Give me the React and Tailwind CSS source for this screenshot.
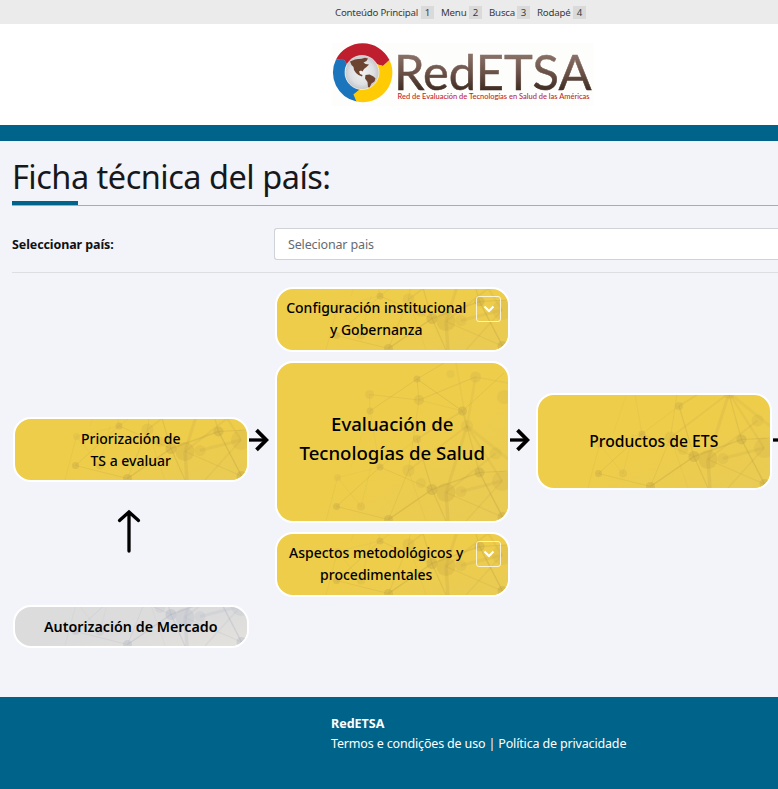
import React from 'react'

const NODES = [
  [141, 16, 3.5, 0.3], [93.5, 31.5, 4.5, 0.16], [94, 48, 3.5, 0.26], [143, 37, 5, 0.22],
  [186.5, 48, 4.5, 0.32], [199.5, 14, 5.5, 0.16], [174.5, 11, 4, 0.12], [228, 34, 7, 0.14],
  [141, 76, 4, 0.26], [104, 104, 3.5, 0.3], [132.5, 107.5, 6, 0.16], [61.5, 114.5, 3.5, 0.14],
  [60.5, 143.5, 3.5, 0.3], [85, 143.5, 4, 0.18], [112.5, 156.5, 4.5, 0.32], [156, 126.5, 5.5, 0.32],
  [170, 129.5, 9.5, 0.22], [185, 128.5, 5.5, 0.16], [203.5, 109.5, 5, 0.34], [219.5, 90.5, 6, 0.14],
  [191, 63, 6, 0.14], [226, 118, 10, 0.16], [226.5, 154, 5, 0.32], [145, 120, 5, 0.14],
]

const LINES = [
  [141, 16, 186.5, 48, 1, 0.28], [141, 16, 94, 48, 1, 0.22], [141, 16, 143, 37, 1, 0.2],
  [93.5, 31.5, 143, 37, 1, 0.2], [93.5, 31.5, 94, 48, 1, 0.14], [141, 16, 168, 0, 1, 0.2],
  [143, 37, 199.5, 14, 1.2, 0.2], [143, 37, 186.5, 48, 1, 0.14], [199.5, 14, 232, 20, 1.5, 0.12],
  [186.5, 48, 228, 10, 1, 0.2], [186.5, 48, 203.5, 109.5, 1.2, 0.24], [186.5, 48, 141, 76, 1.5, 0.18],
  [141, 76, 156, 126.5, 1.2, 0.26], [94, 48, 104, 104, 0.8, 0.14], [104, 104, 141, 76, 0.8, 0.16],
  [61.5, 114.5, 104, 104, 0.8, 0.12], [61.5, 114.5, 50, 158, 0.8, 0.14], [60.5, 143.5, 104, 104, 1, 0.2],
  [60.5, 143.5, 112.5, 156.5, 1, 0.2], [85, 143.5, 61.5, 114.5, 0.8, 0.12], [85, 143.5, 95, 104, 0.8, 0.12],
  [104, 104, 156, 126.5, 1, 0.2], [112.5, 156.5, 156, 126.5, 1.4, 0.32], [112.5, 156.5, 132.5, 107.5, 1, 0.18],
  [132.5, 107.5, 143, 37, 1, 0.16], [132.5, 107.5, 191, 63, 1.6, 0.16], [156, 126.5, 203.5, 109.5, 1.4, 0.28],
  [170, 129.5, 191, 63, 3, 0.17], [170, 129.5, 172, 158, 3.5, 0.2], [191, 63, 232, 96, 3, 0.12],
  [191, 63, 199.5, 14, 2.5, 0.12], [191, 63, 180, 0, 1.5, 0.1], [203.5, 109.5, 232, 108, 1.2, 0.28],
  [203.5, 109.5, 226.5, 154, 1.4, 0.32], [185, 128.5, 226, 118, 3, 0.16], [226.5, 154, 170, 129.5, 1.2, 0.18],
  [156, 126.5, 170, 158, 1.2, 0.28], [226, 118, 191, 63, 2.2, 0.15], [219.5, 90.5, 170, 129.5, 2, 0.16],
  [226, 118, 190, 158, 1.4, 0.16], [94, 48, 75, 104, 0.8, 0.08], [132.5, 107.5, 150, 158, 0.8, 0.12],
]

function Network({ color }) {
  return (
    <svg className="absolute right-0 bottom-0" width="232" height="158" viewBox="0 0 232 158" fill={color} stroke={color} aria-hidden="true">
      {LINES.map(([x1, y1, x2, y2, w, o], i) => (
        <line key={i} x1={x1} y1={y1} x2={x2} y2={y2} strokeWidth={w} strokeOpacity={o} />
      ))}
      {NODES.map(([x, y, r, o], i) => (
        <circle key={i} cx={x} cy={y} r={r} fillOpacity={o} stroke="none" />
      ))}
    </svg>
  )
}

function Card({ className, gray, children }) {
  return (
    <div className={`relative flex w-[235.5px] shrink-0 items-center justify-center overflow-hidden rounded-[18px] border-[2.5px] border-white text-center text-black ${gray ? 'bg-[#dcdcdc]' : 'bg-[#eecd4b]'} ${className}`}>
      <div className={`absolute inset-0 bg-linear-to-br from-transparent from-55% ${gray ? 'to-[#e4e2dc]' : 'to-[#e9cb55]'}`} />
      <Network color={gray ? '#a9adc0' : '#b99d42'} />
      {children}
    </div>
  )
}

function Toggle() {
  return (
    <span className="absolute top-[6.5px] right-[7px] flex h-[26px] w-[25px] items-center justify-center rounded-[3px] border border-white/75">
      <svg width="12" height="8" viewBox="0 0 12 8" fill="none" stroke="#fff" strokeWidth="2" aria-hidden="true">
        <path d="M1.5 1.5 6 6l4.500-4.500" />
      </svg>
    </span>
  )
}

function ArrowRight() {
  return (
    <svg className="shrink-0" width="20" height="24" viewBox="0 0 20 24" fill="none" stroke="#000" strokeWidth="3.300" aria-hidden="true">
      <path d="M0 12h17" />
      <path d="M7.500 2.200 17.300 12l-9.800 9.800" strokeWidth="3.800" />
    </svg>
  )
}

function Logo() {
  return (
    <svg width="262" height="63" viewBox="0 0 262 63" role="img" aria-label="RedETSA">
      <defs>
        <linearGradient id="brown" gradientUnits="userSpaceOnUse" x1="0" y1="12" x2="0" y2="48">
          <stop offset="0" stopColor="#8a7168" />
          <stop offset="0.5" stopColor="#6a5148" />
          <stop offset="1" stopColor="#3d2a20" />
        </linearGradient>
        <radialGradient id="globe">
          <stop offset="0" stopColor="#f2f2f3" />
          <stop offset="0.7" stopColor="#dedfe2" />
          <stop offset="1" stopColor="#c4c6ca" />
        </radialGradient>
      </defs>
      <rect width="262" height="63" fill="#fdfefc" />
      <path d="M4 16.500A30 30 0 0 1 57.500 17L51 23 43 21A17 17 0 0 0 16 22.500L12 17z" fill="#bf1e2e" />
      <path d="M57.500 17A29.500 29.500 0 0 1 24.500 58.500L21.500 52 26 46A17 17 0 0 0 43 20.500L51 23z" fill="#ffcb05" />
      <path d="M4 16.500 11.500 16 15 21A17 17 0 0 0 28 46L21.500 51.500 24.500 58.500A29.500 29.500 0 0 1 4 16.500z" fill="#1b75bc" />
      <circle cx="30" cy="29.500" r="17" fill="url(#globe)" stroke="#fff" strokeWidth="0.600" />
      <path d="M18 18.500l5-2 3-.5 3.500-.3 3.500-1 3 .8-1.500 2.500-3 1.500 2 1.500 3.500.500-2.500 2.500-2.500 2-1.500 2.500-1.500-1-2 1 1 2.500 2.500 1-.5 1.500-3.500-1.500-2.500-2-2-3-.500-3-2-2z" fill="#6b4330" />
      <path d="M33.500 32l4-.5 4 2 2 2-1 3-3 2-2 4-1.500-.5-.5-5-2.500-3.500z" fill="#6b4330" />
      <text x="62" y="47" textLength="197.500" lengthAdjust="spacingAndGlyphs" fontSize="48" fontWeight="400" fill="url(#brown)" stroke="url(#brown)" strokeWidth="0.500" fontFamily="Lato, sans-serif">RedETSA</text>
      <text x="65.500" y="56" textLength="192" lengthAdjust="spacingAndGlyphs" fontSize="7" fontWeight="500" fill="#bf1e2e" fontFamily="Lato, sans-serif">Red de Evaluación de Tecnologías en Salud de las Américas</text>
    </svg>
  )
}

const SHORTCUTS = [
  ['Conteúdo Principal', '1', 'w-[83px]', 'mr-[7px]'],
  ['Menu', '2', 'w-[25px]', 'mr-[7px]'],
  ['Busca', '3', 'w-[25px]', 'mr-[7px]'],
  ['Rodapé', '4', 'w-[33px]', ''],
]

export default function App() {
  return (
    <div className="flex h-[789px] w-[778px] flex-col overflow-hidden bg-[#f3f4f9] font-['Noto_Sans','Open_Sans',sans-serif] whitespace-nowrap text-[#111]">
      <div className="flex h-[24px] shrink-0 items-center bg-[#ebebeb] pt-[2px] pl-[335px] text-[9.7px] text-[#3a3a3a]">
        {SHORTCUTS.map(([label, key, width, gap]) => (
          <div key={key} className={`flex items-center ${gap}`}>
            <span className={`${width} tracking-[-0.200px]`}>{label}</span>
            <span className="ml-[3px] flex h-[13px] w-[13px] items-center justify-center bg-[#dadada]">{key}</span>
          </div>
        ))}
      </div>
      <header className="h-[101px] shrink-0 bg-white pt-[19px] pl-[332px]">
        <Logo />
      </header>
      <div className="h-[16px] shrink-0 bg-[#006389]" />
      <main className="h-[556px] shrink-0 pl-[12px]">
        <div className="flex h-[65px] items-end border-b border-[#a9abae]">
          <h1 className="h-full w-[66px] border-b-4 border-[#006389] pt-[14px] text-[32.5px] leading-[44px] tracking-[-0.5px] text-[#16181c]">Ficha técnica del país:</h1>
        </div>
        <div className="flex h-[67px] items-center border-b border-[#dcdee2] pt-[10px]">
          <label className="w-[262px] pt-[2px] text-[12.5px] font-bold tracking-[-0.1px]">Seleccionar país:</label>
          <div className="flex h-[32px] flex-1 items-center rounded-l-[3px] border border-r-0 border-[#cfd3d9] bg-white pt-[3px] pl-[13px] text-[12.5px] tracking-[-0.15px] text-[#666a70]">Selecionar pais</div>
        </div>
        <div className="flex pt-[14px] pl-px text-[14px] leading-[22px] font-medium">
          <div className="flex w-[235.5px] flex-col items-center pt-[130px]">
            <Card className="h-[65px]">
              <span className="relative">Priorización de<br />TS a evaluar</span>
            </Card>
            <svg className="mt-[27px] mr-[3px]" width="24" height="44" viewBox="0 0 24 44" fill="none" stroke="#000" strokeWidth="3.300" strokeLinecap="round" aria-hidden="true">
              <path d="M12 42V3M2.500 11.500 12 3l9.500 8.500" />
            </svg>
            <Card gray className="mt-[52px] h-[43px] text-[14.3px] font-semibold">
              <span className="relative">Autorización de Mercado</span>
            </Card>
          </div>
          <div className="w-[26px] pt-[141px]"><ArrowRight /></div>
          <div className="flex flex-col gap-[9px]">
            <Card className="h-[65px] pr-[32px]">
              <span className="relative pb-[2px]">Configuración institucional<br />y Gobernanza</span>
              <Toggle />
            </Card>
            <Card className="h-[162px] text-[18.6px] leading-[29px]">
              <span className="relative pb-[8px]">Evaluación de<br />Tecnologías de Salud</span>
            </Card>
            <Card className="h-[65px] pr-[32px]">
              <span className="relative pb-px">Aspectos metodológicos y<br />procedimentales</span>
              <Toggle />
            </Card>
          </div>
          <div className="w-[26px] pt-[141px]"><ArrowRight /></div>
          <div className="pt-[106px]">
            <Card className="h-[97px] text-[15.7px]">
              <span className="relative pb-[2px]">Productos de ETS</span>
            </Card>
          </div>
          <div className="w-[6px] overflow-hidden pt-[141px] pl-px"><ArrowRight /></div>
        </div>
      </main>
      <footer className="flex-1 bg-[#006389] pt-[17px] pl-[331px] text-[12.5px] leading-[20px] text-white">
        <div className="font-bold">RedETSA</div>
        <div className="tracking-[-0.16px]">Termos e condições de uso | Política de privacidade</div>
      </footer>
    </div>
  )
}
